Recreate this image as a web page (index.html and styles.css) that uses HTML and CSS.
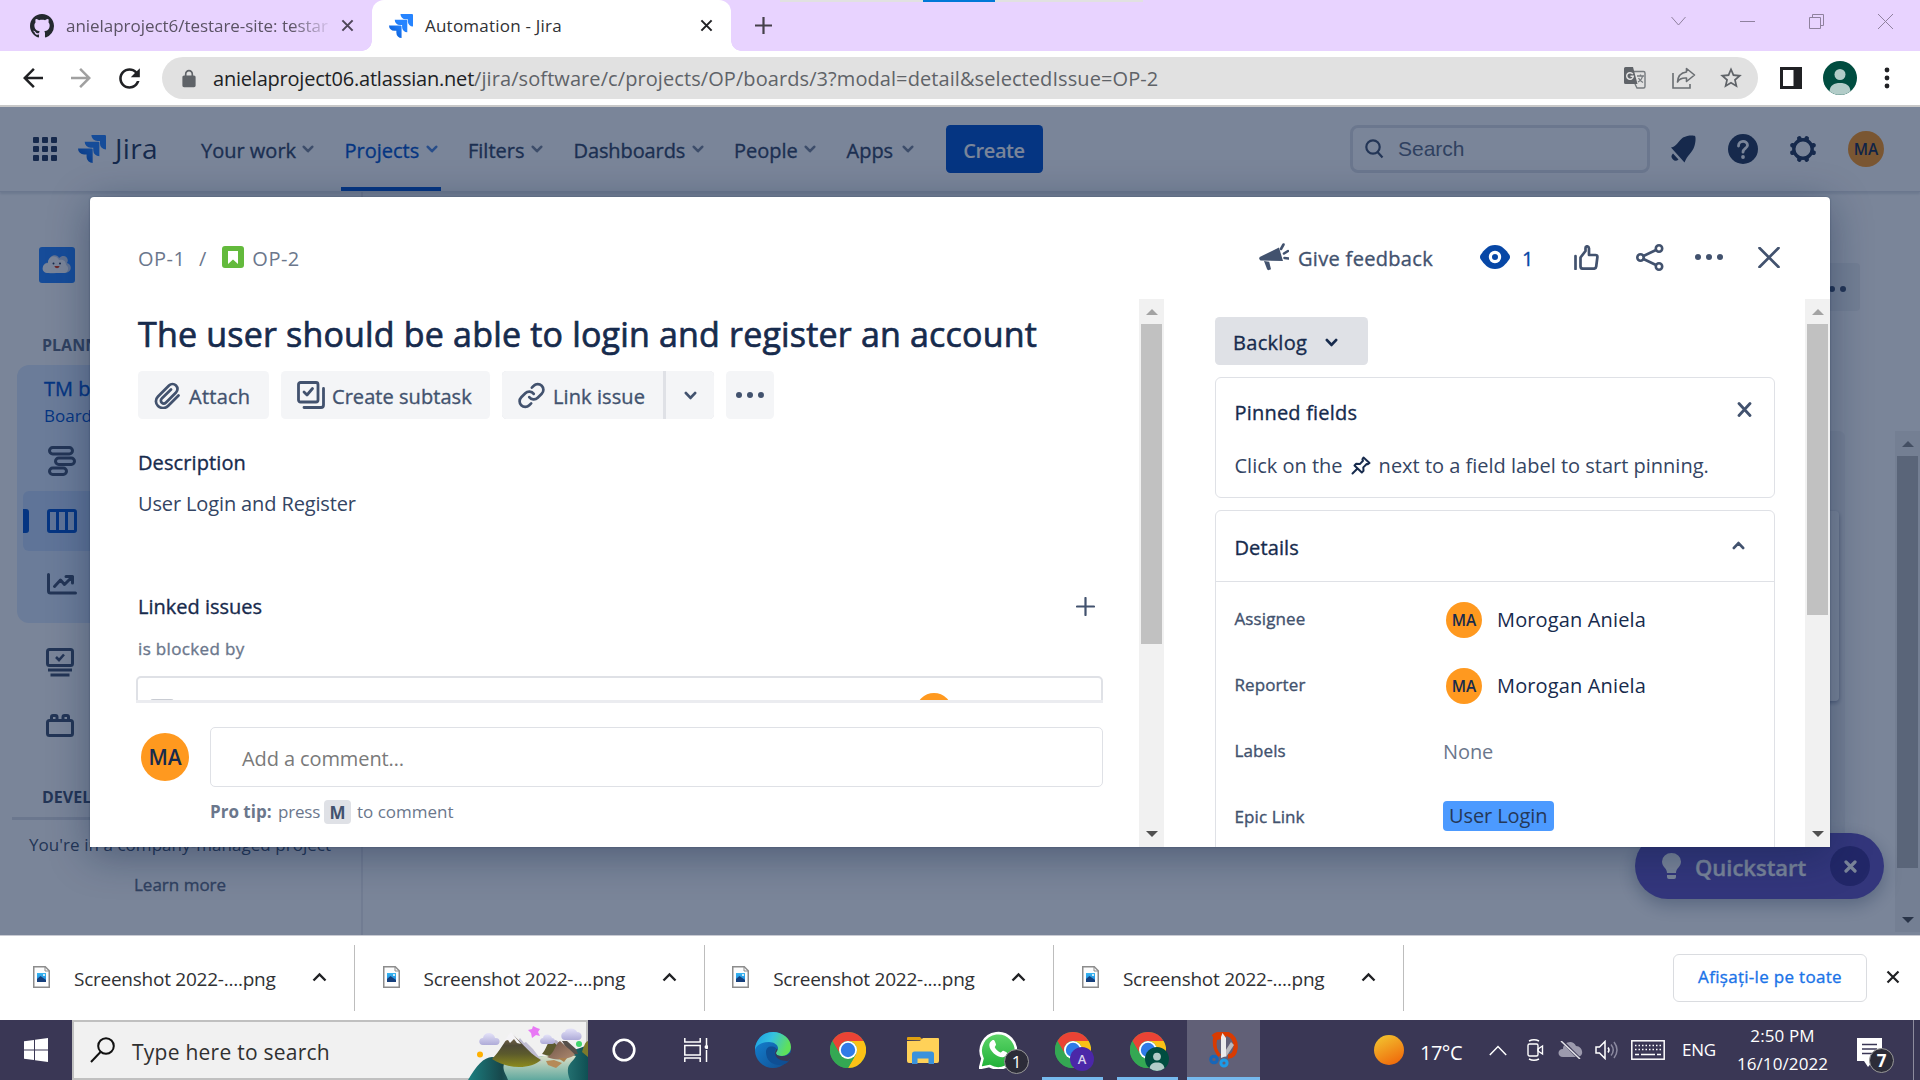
FILE: index.html
```
<!DOCTYPE html>
<html lang="en">
<head>
<meta charset="utf-8">
<title>Automation - Jira</title>
<link rel="stylesheet" href="styles.css">
</head>
<body>
<svg class="defs" width="0" height="0">
  <defs>
    <linearGradient id="gj" x1="1" y1="0" x2="0" y2="1"><stop offset=".3" stop-color="#2684ff"/><stop offset="1" stop-color="#0052cc"/></linearGradient>
    <linearGradient id="gsun" x1=".2" y1="0" x2=".7" y2="1"><stop offset="0" stop-color="#f2c32f"/><stop offset="1" stop-color="#f0690b"/></linearGradient>
    <linearGradient id="gedge" x1="0" y1="0" x2="1" y2=".3"><stop offset="0" stop-color="#1b9de2"/><stop offset=".5" stop-color="#35c1e0"/><stop offset="1" stop-color="#5fe05a"/></linearGradient>
    <linearGradient id="gedge2" x1="0" y1="0" x2="1" y2="1"><stop offset="0" stop-color="#1386d8"/><stop offset="1" stop-color="#114a8b"/></linearGradient>
    <linearGradient id="gwa" x1="0" y1="0" x2="0" y2="1"><stop offset="0" stop-color="#5fd66a"/><stop offset="1" stop-color="#20b038"/></linearGradient>
    <linearGradient id="gmt" x1="0" y1="0" x2="0" y2="1"><stop offset="0" stop-color="#8b7355"/><stop offset=".35" stop-color="#4f4a35"/><stop offset=".6" stop-color="#5b5a2c"/><stop offset="1" stop-color="#8c8a1c"/></linearGradient>
    <linearGradient id="gmt2" x1="0" y1="0" x2="1" y2="1"><stop offset="0" stop-color="#6b5347"/><stop offset="1" stop-color="#b08a70"/></linearGradient>
    <linearGradient id="gcl" x1="0" y1="0" x2="0" y2="1"><stop offset="0" stop-color="#e4e2f8"/><stop offset="1" stop-color="#aeabd8"/></linearGradient>
    <linearGradient id="gsea" x1="0" y1="0" x2="1" y2="0"><stop offset="0" stop-color="#1c7f80"/><stop offset=".28" stop-color="#17474b"/><stop offset=".6" stop-color="#3d9c97"/><stop offset="1" stop-color="#0f4f53"/></linearGradient>
    <linearGradient id="gsand" x1="0" y1="0" x2="0" y2="1"><stop offset="0" stop-color="#e3e3cb"/><stop offset="1" stop-color="#5fa89e"/></linearGradient>
    <linearGradient id="gpic" x1="0" y1="0" x2="0" y2="1"><stop offset="0" stop-color="#37b6f2"/><stop offset="1" stop-color="#1c7fd6"/></linearGradient>
    <symbol id="jira" viewBox="0 0 24 24"><path fill="#2684ff" d="M23.013 0H11.455a5.215 5.215 0 0 0 5.215 5.215h2.129v2.057A5.215 5.215 0 0 0 24 12.483V1.005A1.001 1.001 0 0 0 23.013 0Z"/><path fill="url(#gj)" d="M17.294 5.757H5.736a5.215 5.215 0 0 0 5.215 5.214h2.129v2.058a5.218 5.218 0 0 0 5.215 5.214V6.758a1.001 1.001 0 0 0-1.001-1.001zM11.571 11.513H0a5.218 5.218 0 0 0 5.232 5.215h2.130v2.057A5.215 5.215 0 0 0 12.575 24V12.518a1.005 1.005 0 0 0-1.005-1.005z"/></symbol>
    <symbol id="chev" viewBox="0 0 12 8"><path d="M1.800 1.800 6 6.200l4.200-4.400" fill="none" stroke="currentColor" stroke-width="2.600" stroke-linecap="round" stroke-linejoin="round"/></symbol>
    <symbol id="cross" viewBox="0 0 14 14"><path d="M1.500 1.500l11 11M12.500 1.500l-11 11" fill="none" stroke="currentColor" stroke-width="2.200"/></symbol>
    <symbol id="dots" viewBox="0 0 28 8"><circle cx="3" cy="4" r="3"/><circle cx="14" cy="4" r="3"/><circle cx="25" cy="4" r="3"/></symbol>
    <symbol id="person" viewBox="0 0 34 34"><circle cx="17" cy="17" r="17" fill="#004d40"/><circle cx="17" cy="13.500" r="5.500" fill="#b2ccc8"/><path d="M6.500 30.200C7 24.500 11 22 17 22s10 2.500 10.500 8.200A17 17 0 0 1 6.500 30.200z" fill="#b2ccc8"/></symbol>
    <symbol id="chrome" viewBox="0 0 36 36"><circle cx="18" cy="18" r="18" fill="#34a853"/><path d="M2.400 9A18 18 0 0 1 33.600 9H18a9 9 0 0 0-7.800 13.500z" fill="#ea4335"/><path d="M33.600 9A18 18 0 0 1 18 36l7.800-13.500A9 9 0 0 0 18 9z" fill="#fbc116"/><path d="M2.400 9l7.800 13.500A9 9 0 0 0 25.800 22.500L18 36A18 18 0 0 1 2.400 9z" fill="#34a853"/><circle cx="18" cy="18" r="9" fill="#fff"/><circle cx="18" cy="18" r="7.200" fill="#2f7be8"/></symbol>
    <symbol id="file" viewBox="0 0 17 22"><path d="M.75.75h11.500l4 4v16.500H.75z" fill="#fdfdfd" stroke="#8c8c8c" stroke-width="1.500"/><path d="M12 1v4h4" fill="none" stroke="#8c8c8c"/><path d="M4 7h9v9H4z" fill="url(#gpic)"/><path d="M4 16v-3l3.500-3L13 14v2z" fill="#16407c"/><circle cx="11" cy="9" r="1" fill="#fff"/></symbol>
  </defs>
</svg>

<header class="tabs">
  <div class="tab">
    <svg width="24" height="24" viewBox="0 0 16 16" fill="#24292f"><path d="M8 0C3.580 0 0 3.580 0 8c0 3.540 2.290 6.530 5.470 7.590.4.07.55-.17.55-.38 0-.19-.01-.82-.01-1.490-2.010.37-2.530-.49-2.690-.94-.09-.23-.48-.94-.82-1.130-.28-.15-.68-.52-.01-.53.63-.01 1.080.58 1.230.82.72 1.210 1.870.87 2.330.66.07-.52.28-.87.51-1.070-1.780-.2-3.640-.89-3.640-3.950 0-.87.31-1.590.82-2.150-.08-.2-.36-1.020.08-2.120 0 0 .67-.21 2.200.82.64-.18 1.320-.27 2-.27s1.360.09 2 .27c1.530-1.040 2.200-.82 2.200-.82.44 1.100.16 1.920.08 2.120.51.56.82 1.270.82 2.150 0 3.070-1.870 3.750-3.650 3.950.29.25.54.73.54 1.480 0 1.070-.01 1.930-.01 2.200 0 .21.15.46.55.38A8.010 8.010 0 0 0 16 8c0-4.420-3.580-8-8-8z"/></svg>
    <span class="tab-title tab-title-faded">anielaproject6/testare-site: testar</span>
    <svg class="tab-x" width="13" height="13"><use href="#cross"/></svg>
  </div>
  <div class="tab tab-active">
    <svg width="24" height="24"><use href="#jira"/></svg>
    <span class="tab-title">Automation - Jira</span>
    <svg class="tab-x" width="13" height="13"><use href="#cross"/></svg>
  </div>
  <svg class="new-tab" width="17" height="17" viewBox="0 0 17 17"><path d="M8.500 0v17M0 8.500h17" stroke="#45404a" stroke-width="2.200"/></svg>
  <div class="share-bar"><i></i></div>
  <div class="win">
    <svg width="15" height="15" viewBox="0 0 15 15"><path d="M.5 3l7 8 7-8"/></svg>
    <svg width="15" height="15" viewBox="0 0 15 15"><path d="M0 7.500h15"/></svg>
    <svg width="15" height="15" viewBox="0 0 15 15"><path d="M.5 3.500h11v11H.5zM3.500 3.500v-3h11v11h-3"/></svg>
    <svg width="15" height="15" viewBox="0 0 15 15"><path d="M0 0l15 15M15 0L0 15"/></svg>
  </div>
</header>

<div class="toolbar">
  <svg width="30" height="30" viewBox="0 0 24 24" fill="#202124"><path d="M20 11H7.830l5.590-5.590L12 4l-8 8 8 8 1.410-1.410L7.830 13H20v-2z"/></svg>
  <svg class="fwd" width="30" height="30" viewBox="0 0 24 24" fill="#a0a0a0"><path d="M4 13h12.170l-5.590 5.590L12 20l8-8-8-8-1.410 1.410L16.170 11H4v2z"/></svg>
  <svg class="reload" width="31" height="31" viewBox="0 0 24 24" fill="#202124"><path d="M17.650 6.350C16.200 4.900 14.210 4 12 4c-4.420 0-7.990 3.580-7.990 8s3.570 8 7.990 8c3.730 0 6.840-2.550 7.730-6h-2.080c-.82 2.330-3.040 4-5.650 4-3.310 0-6-2.690-6-6s2.690-6 6-6c1.660 0 3.140.69 4.220 1.780L13 11h7V4l-2.350 2.350z"/></svg>
  <div class="omni">
    <svg width="18" height="19" viewBox="2 0 20 23" fill="#5f6368"><path d="M18 8h-1V6c0-2.760-2.240-5-5-5S7 3.240 7 6v2H6c-1.100 0-2 .9-2 2v10c0 1.100.9 2 2 2h12c1.100 0 2-.9 2-2V10c0-1.100-.9-2-2-2zM9 6c0-1.660 1.340-3 3-3s3 1.340 3 3v2H9V6z"/></svg>
    <div class="url"><span class="host">anielaproject06.atlassian.net</span><span class="path">/jira/software/c/projects/OP/boards/3?modal=detail&amp;selectedIssue=OP-2</span></div>
    <svg width="22" height="22" viewBox="0 0 22 22"><path d="M10 4.500h9.500a1.500 1.500 0 0 1 1.500 1.500v13.500a1.500 1.500 0 0 1-1.500 1.500H13l-2-4" fill="none" stroke="#757a7e" stroke-width="1.400"/><path d="M1.500 0H9l4.500 17H1.500A1.500 1.500 0 0 1 0 15.500v-14A1.500 1.500 0 0 1 1.500 0z" fill="#5f6368"/><path d="M8.800 7.200A3.300 3.300 0 1 0 9.300 9.300H6.500" fill="none" stroke="#e1e1e1" stroke-width="1.500"/><path d="M13 9h7M16.500 7.500V9M18.500 9c-.5 3-2.500 5-4.500 6M14.500 11c1 2 2.500 3.500 4.500 4.500" fill="none" stroke="#757a7e" stroke-width="1.300"/></svg>
    <svg class="share" width="24" height="22" viewBox="0 0 24 22" fill="none" stroke="#6a6e72" stroke-width="1.600"><path d="M1 6v15h17v-4"/><path d="M14.500 1.500 22.500 8l-8 6.500V11c-4.500-.3-7.500 1.200-9 4 .3-5.500 3.500-9.300 9-10z" stroke-linejoin="round"/></svg>
    <svg width="26" height="26" viewBox="0 0 24 24" fill="#5f6368"><path d="M22 9.240l-7.190-.62L12 2 9.190 8.630 2 9.240l5.460 4.730L5.820 21 12 17.270 18.180 21l-1.630-7.030L22 9.240zM12 15.400l-3.760 2.270 1-4.280-3.320-2.880 4.380-.38L12 6.100l1.710 4.040 4.380.38-3.320 2.880 1 4.280L12 15.400z"/></svg>
  </div>
  <svg width="22" height="22" viewBox="0 0 22 22"><path d="M0 0h22v22H0z" fill="#202124"/><path d="M3 3h10.500v16H3z" fill="#fff"/></svg>
  <svg class="me" width="34" height="34"><use href="#person"/></svg>
  <svg width="6" height="22" viewBox="0 0 6 22" fill="#202124"><circle cx="3" cy="3" r="2.400"/><circle cx="3" cy="11" r="2.400"/><circle cx="3" cy="19" r="2.400"/></svg>
</div>

<main class="page">
  <nav class="nav">
    <svg width="24" height="24" viewBox="0 0 24 24" fill="#253858"><path d="M1 0h4a1 1 0 0 1 1 1v4a1 1 0 0 1-1 1H1a1 1 0 0 1-1-1V1a1 1 0 0 1 1-1zm9 0h4a1 1 0 0 1 1 1v4a1 1 0 0 1-1 1h-4a1 1 0 0 1-1-1V1a1 1 0 0 1 1-1zm9 0h4a1 1 0 0 1 1 1v4a1 1 0 0 1-1 1h-4a1 1 0 0 1-1-1V1a1 1 0 0 1 1-1zM1 9h4a1 1 0 0 1 1 1v4a1 1 0 0 1-1 1H1a1 1 0 0 1-1-1v-4a1 1 0 0 1 1-1zm9 0h4a1 1 0 0 1 1 1v4a1 1 0 0 1-1 1h-4a1 1 0 0 1-1-1v-4a1 1 0 0 1 1-1zm9 0h4a1 1 0 0 1 1 1v4a1 1 0 0 1-1 1h-4a1 1 0 0 1-1-1v-4a1 1 0 0 1 1-1zM1 18h4a1 1 0 0 1 1 1v4a1 1 0 0 1-1 1H1a1 1 0 0 1-1-1v-4a1 1 0 0 1 1-1zm9 0h4a1 1 0 0 1 1 1v4a1 1 0 0 1-1 1h-4a1 1 0 0 1-1-1v-4a1 1 0 0 1 1-1zm9 0h4a1 1 0 0 1 1 1v4a1 1 0 0 1-1 1h-4a1 1 0 0 1-1-1v-4a1 1 0 0 1 1-1z"/></svg>
    <svg class="logo" width="28" height="28"><use href="#jira"/></svg>
    <span class="brand">Jira</span>
    <div class="links">
      <a class="link w-work">Your work<svg width="12" height="8"><use href="#chev"/></svg></a>
      <a class="link w-proj active">Projects<svg width="12" height="8"><use href="#chev"/></svg></a>
      <a class="link w-filt">Filters<svg width="12" height="8"><use href="#chev"/></svg></a>
      <a class="link w-dash">Dashboards<svg width="12" height="8"><use href="#chev"/></svg></a>
      <a class="link w-peop">People<svg width="12" height="8"><use href="#chev"/></svg></a>
      <a class="link w-apps">Apps<svg width="12" height="8"><use href="#chev"/></svg></a>
    </div>
    <div class="create">Create</div>
    <div class="search"><svg width="19" height="20" viewBox="0 0 19 20" fill="none" stroke="#42526e" stroke-width="2.200"><circle cx="8" cy="8" r="6.700"/><path d="M12.500 13l5 5.500"/></svg>Search</div>
    <svg class="bell" width="26" height="28" viewBox="0 0 26 28" fill="#253858"><path d="M1 12.500C7 11.500 8 6 13 2.500 17 0 24 0 25 1s.8 8-1.500 12.500C21.500 18 17.500 20 14.500 27.500z"/><path d="M3 18.500l5.500 6a3.600 3.600 0 0 1-5.500-6z"/></svg>
    <svg class="help" width="30" height="30" viewBox="0 0 30 30"><circle cx="15" cy="15" r="15" fill="#253858"/><path d="M10.500 12c0-6 9-6 9-.8 0 3.300-4.500 3.300-4.500 7" fill="none" stroke="#fff" stroke-width="2.800" stroke-linecap="round"/><circle cx="15" cy="23" r="1.900" fill="#fff"/></svg>
    <svg class="gear" width="28" height="28" viewBox="0 0 28 28" fill="none" stroke="#253858"><circle cx="14" cy="14" r="9.200" stroke-width="3.400"/><path stroke-width="4.600" stroke-linecap="round" d="M10.300 3.400l.3.900M17.700 3.400l-.3.900M10.300 24.600l.3-.9M17.700 24.600l-.3-.9M3.400 10.300l.9.300M3.400 17.700l.9-.3M24.600 10.300l-.9.300M24.600 17.700l-.9-.3"/></svg>
    <div class="av av36">MA</div>
  </nav>

  <div class="body">
    <aside class="side">
      <svg class="proj" width="36" height="36" viewBox="0 0 36 36"><rect width="36" height="36" rx="3" fill="#2684ff"/><path d="M17 26c-5 .5-13 .7-13-5 0-4 3-5.500 5-5.200C9.500 8 18 6 20 11c5-5 11 0 8 5 5 1 6 10-3 10z" fill="#c9d6ee"/><path d="M8 26c-6-.5-6-9 1-10 0-7 8-9 11-3 5-1 7 2 7 5 3 1 3 8-2 8z" fill="#fff"/><circle cx="14.500" cy="16.500" r="1" fill="#253858"/><circle cx="21" cy="16.500" r="1" fill="#253858"/><path d="M15.500 19h5c-.5 3-4.500 3-5 0z" fill="#de350b"/></svg>
      <div class="side-h">PLANNING</div>
      <div class="group">
        <div class="g-title">TM board</div>
        <div class="g-sub">Board</div>
        <div class="g-item g-road"><svg width="28" height="30" viewBox="0 0 28 30" fill="none" stroke="#42526e" stroke-width="3"><rect x="1.500" y="1.500" width="23" height="6.500" rx="3.200"/><rect x="7.500" y="12" width="19" height="6.500" rx="3.200"/><rect x="1.500" y="22" width="17" height="6.500" rx="3.200"/></svg></div>
        <div class="g-item g-sel"><i></i><svg width="30" height="24" viewBox="0 0 30 24" fill="none" stroke="#0052cc" stroke-width="3"><rect x="1.500" y="1.500" width="27" height="21" rx="1.500"/><path d="M10.500 1v22M19.500 1v22"/></svg></div>
        <div class="g-item g-chart"><svg width="30" height="22" viewBox="0 0 30 22" fill="none" stroke="#42526e" stroke-width="3" stroke-linecap="round" stroke-linejoin="round"><path d="M1.500 1.500V18q0 2 2 2h25"/><path d="M7.500 13.500l6-6.500 4 4.500 8-8M19 3.500h6.500V10"/></svg></div>
      </div>
      <svg class="s-ico1" width="28" height="29" viewBox="0 0 28 29" fill="none" stroke="#42526e"><rect x="1.500" y="1.500" width="25" height="16" rx="2" stroke-width="3"/><path d="M10 9l3 3 5-5.500" stroke-width="2.600"/><path d="M2 22h24M4.500 27h19" stroke-width="3"/></svg>
      <svg class="s-ico2" width="28" height="23" viewBox="0 0 28 23" fill="none" stroke="#42526e" stroke-width="3"><rect x="1.500" y="6.500" width="25" height="15" rx="2"/><path d="M5.500 6V3q0-1.500 1.500-1.500h2.500Q11 1.500 11 3v3M17 6V3q0-1.500 1.500-1.500H21q1.500 0 1.500 1.500v3"/></svg>
      <div class="side-h dev">DEVELOPMENT</div>
      <div class="rule"></div>
      <div class="foot1">You're in a company-managed project</div>
      <div class="foot2">Learn more</div>
    </aside>
    <section class="board">
      <div class="board-more"><svg width="28" height="8" fill="#42526e"><use href="#dots"/></svg></div>
      <div class="board-col"><div class="card"></div></div>
    </section>
    <div class="page-scroll"><i class="up"></i><b></b><i class="dn"></i></div>
  </div>

  <div class="quick"><svg width="19" height="26" viewBox="0 0 19 26" fill="#fff"><path d="M5 20c0-5-5-6-5-11.500a9.500 8.500 0 0 1 19 0C19 14 14 15 14 20zM5 22h9v2q0 2-2 2H7q-2 0-2-2z"/></svg><span>Quickstart</span><em><svg width="13" height="13" viewBox="0 0 13 13"><path d="M2 2l9 9M11 2l-9 9" stroke="#fff" stroke-width="3.200" stroke-linecap="round"/></svg></em></div>
  <div class="blanket"></div>

  <div class="modal">
    <div class="m-head">
      <span class="crumb">OP-1</span><span class="slash">/</span>
      <svg class="story" width="22" height="22" viewBox="0 0 22 22"><rect width="22" height="22" rx="3" fill="#63ba3c"/><path d="M6 5h10v13l-5-4.500L6 18z" fill="#fff"/></svg>
      <span class="crumb">OP-2</span>
      <svg class="horn" width="30" height="28" viewBox="0 0 30 28"><path d="M20 4.500L24 18 1.500 17.500q-2-1.500-.8-3.500z" fill="#42526e"/><path d="M5 18l3 8q.5 1.500 2 1l2-.8-1.800-7.500z" fill="#42526e"/><path d="M22 6l2.500-4.500M25 10.500l4-2.500M25.500 15l4 .5" stroke="#42526e" stroke-width="2.600" stroke-linecap="round"/></svg>
      <span class="feedback">Give feedback</span>
      <svg class="eye" width="30" height="24" viewBox="0 0 30 24"><path d="M15 0C22 0 26 5 29.500 10q1 2 0 4C26 19 22 24 15 24S4 19 .5 14q-1-2 0-4C4 5 8 0 15 0z" fill="#0747a6"/><circle cx="15" cy="12" r="4.600" fill="none" stroke="#fff" stroke-width="3.200"/></svg>
      <span class="watch">1</span>
      <svg class="thumb" width="25" height="25" viewBox="0 0 25 25" fill="none" stroke="#42526e" stroke-width="2.700" stroke-linejoin="round"><path d="M1.500 11v13" stroke-linecap="round"/><path d="M6.500 12.500l5-6.500V3q0-1.700 1.600-1.700T15 3.500V10h6.500q2 0 1.900 2l-1.200 9.500q-.3 2.200-2.400 2.200H9q-2.500 0-2.500-2.500z"/></svg>
      <svg class="shr" width="28" height="27" viewBox="0 0 28 27" fill="none" stroke="#42526e" stroke-width="2.600"><circle cx="4.500" cy="13.500" r="3.200"/><circle cx="23" cy="4.500" r="3.200"/><circle cx="23" cy="22.500" r="3.200"/><path d="M7.500 12L20 6M7.500 15L20 21"/></svg>
      <svg class="dts" width="28" height="8" viewBox="0 0 28 8" fill="#42526e"><use href="#dots"/></svg>
      <svg width="22" height="21" viewBox="0 0 22 21" stroke="#42526e" stroke-width="2.700" stroke-linecap="round"><path d="M1.500 1l19 19M20.500 1l-19 19"/></svg>
    </div>
    <div class="m-body">
      <div class="left">
        <h1>The user should be able to login and register an account</h1>
        <div class="btns">
          <div class="btn b-att"><svg width="26" height="27" viewBox="0 0 26 27" fill="none" stroke="#42526e" stroke-width="2.700" stroke-linecap="round"><path d="M24.500 13.500L14 24c-3 3-7.500 2.300-10 0s-3-6.500 0-9.500L15 3.500c2-2 5-2 7 0s2 5 0 7L12 20.500c-1.300 1.300-3 1.300-4.200.2s-1.300-3 0-4.200L17 7.500"/></svg>Attach</div>
          <div class="btn b-sub"><svg width="28" height="28" viewBox="0 0 28 28" fill="none" stroke="#42526e" stroke-width="2.800" stroke-linecap="round" stroke-linejoin="round"><rect x="1.500" y="1.500" width="19.500" height="19.500" rx="2"/><path d="M7 11l3 3 5.500-6.500M7 26.500h17q2.500 0 2.500-2.500V7.500"/></svg>Create subtask</div>
          <div class="split"><div class="btn b-link"><svg width="27" height="27" viewBox="0 0 24 24" fill="none" stroke="#42526e" stroke-width="2.400" stroke-linecap="round"><path d="M10 13.500a5 5 0 0 0 7.500.5l3.600-3.500a5 5 0 0 0-7.100-7.100L12.300 5"/><path d="M14 10.500a5 5 0 0 0-7.500-.5l-3.600 3.500a5 5 0 0 0 7.100 7.100l1.700-1.600"/></svg>Link issue</div><div class="btn b-chev"><svg width="13" height="9"><use href="#chev"/></svg></div></div>
          <div class="btn b-more"><svg width="28" height="8" fill="#42526e"><use href="#dots"/></svg></div>
        </div>
        <h2 class="desc">Description</h2>
        <p class="desc-t">User Login and Register</p>
        <div class="li-row"><h2>Linked issues</h2><svg width="19" height="19" viewBox="0 0 19 19"><path d="M9.500 1v17M1 9.500h17" stroke="#42526e" stroke-width="2.200" stroke-linecap="round"/></svg></div>
        <div class="blocked">is blocked by</div>
        <div class="li-clip"><div class="li-box"><i class="stub"></i><i class="dot"></i></div></div>
        <div class="comment">
          <div class="av av48">MA</div>
          <div>
            <div class="c-in">Add a comment…</div>
            <div class="tip"><b>Pro tip:</b><span class="press">press</span><kbd>M</kbd><span>to comment</span></div>
          </div>
        </div>
      </div>
      <div class="scroll"><i class="up"></i><b class="t1"></b><i class="dn"></i></div>
      <div class="right">
        <div class="status">Backlog<svg width="13" height="9"><use href="#chev"/></svg></div>
        <div class="panel pinned">
          <div class="p-head">Pinned fields<svg width="15" height="15" viewBox="0 0 15 15" stroke="#42526e" stroke-width="2.800" stroke-linecap="round"><path d="M2 1.500l11 12M13 1.500L2 13.500"/></svg></div>
          <div class="p-text">Click on the <svg width="20" height="19" viewBox="0 0 20 19" fill="none" stroke="#172b4d" stroke-width="2" stroke-linejoin="round" stroke-linecap="round"><path d="M12.500 1.500L18.500 7l-2 1.300-.8-.3-3.400 3.400.2 3.400-1.700 1.700L3.500 9.500l1.700-1.700 3.600.3L12 4.800l-.6-1.500zM6.500 12.500L1.500 17.500"/></svg> next to a field label to start pinning.</div>
        </div>
        <div class="panel details">
          <div class="d-head">Details<svg class="flip" width="13" height="9"><use href="#chev"/></svg></div>
          <div class="f"><label>Assignee</label><div class="av av36">MA</div><span>Morogan Aniela</span></div>
          <div class="f"><label>Reporter</label><div class="av av36">MA</div><span>Morogan Aniela</span></div>
          <div class="f"><label>Labels</label><span class="none">None</span></div>
          <div class="f"><label>Epic Link</label><span class="epic">User Login</span></div>
        </div>
      </div>
      <div class="scroll"><i class="up"></i><b class="t2"></b><i class="dn"></i></div>
    </div>
  </div>
</main>

<div class="shelf">
  <div class="dl"><svg width="17" height="22"><use href="#file"/></svg><span>Screenshot 2022-....png</span><svg class="flip" width="15" height="10" viewBox="0 0 15 10"><path d="M1.500 1.500l6 6 6-6" fill="none" stroke="#202124" stroke-width="2.400"/></svg></div>
  <div class="dl"><svg width="17" height="22"><use href="#file"/></svg><span>Screenshot 2022-....png</span><svg class="flip" width="15" height="10" viewBox="0 0 15 10"><path d="M1.500 1.500l6 6 6-6" fill="none" stroke="#202124" stroke-width="2.400"/></svg></div>
  <div class="dl"><svg width="17" height="22"><use href="#file"/></svg><span>Screenshot 2022-....png</span><svg class="flip" width="15" height="10" viewBox="0 0 15 10"><path d="M1.500 1.500l6 6 6-6" fill="none" stroke="#202124" stroke-width="2.400"/></svg></div>
  <div class="dl"><svg width="17" height="22"><use href="#file"/></svg><span>Screenshot 2022-....png</span><svg class="flip" width="15" height="10" viewBox="0 0 15 10"><path d="M1.500 1.500l6 6 6-6" fill="none" stroke="#202124" stroke-width="2.400"/></svg></div>
  <div class="all">Afișați-le pe toate</div>
  <svg class="sx" width="14" height="14"><use href="#cross"/></svg>
</div>

<footer class="task">
  <div class="start"><svg width="24" height="24" viewBox="0 0 24 24" fill="#fff"><path d="M0 3.300L10 2v9.500H0zM11 1.800L24 0v11.500H11zM0 12.500h10V22L0 20.700zM11 12.500h13V24l-13-1.800z"/></svg></div>
  <div class="tsearch">
    <svg width="26" height="26" viewBox="0 0 26 26" fill="none" stroke="#111" stroke-width="2"><circle cx="16" cy="9" r="7.800"/><path d="M10.500 15L1 25"/></svg>
    <span>Type here to search</span>
    <svg class="art" width="120" height="60" viewBox="0 0 120 60">
      <path d="M0 60C8 46 16 37 24 37c24 4 66 0 96-12v35z" fill="url(#gsea)"/>
      <path d="M36 44c20-2 50-14 72-8-4 8-12 8-6 24H40c-2-6-6-10-4-16z" fill="url(#gsand)"/>
      <path d="M46 14l4 7 2-3 4 5 2-1 7 7 9 12-14 2z" fill="#c0bdd2"/>
      <path d="M24 39C33 30 37 20 43 14c8 4 16 18 30 26-10 9-32 10-49-1z" fill="url(#gmt)"/><path d="M36 21l7-9 10 12-4-1-3-4-4 4-2-3z" fill="#f4f3f6"/>
      <path d="M84 21l4-1 7 6 3 10-10-2z" fill="#b6b1c4"/><path d="M74 34c4-4 5-12 9-13 4 2 9 6 11 11l-9 5z" fill="#5c5a2e"/><path d="M94 21l5 0 9 8 2 5-8 0z" fill="#55504a"/><path d="M79 37c8-3 8-14 13-16 3 3 12 10 15 14-8 5-20 6-28 2z" fill="url(#gmt2)"/><path d="M114 32c2-6 3-10 6-11v16z" fill="#7d7a2c"/>
      <path d="M78 41l8-1 8 3-6 5-8-3z" fill="#b58a58"/><path d="M90 38h9l-3 4z" fill="#a9804f"/>
      <path d="M15 25c-5 0-5-7 0-7 1-7 11-6 12 0 6-1 6 7 1 7z" fill="url(#gcl)"/><path d="M97 20c-5 0-5-8 0-8 1-5 11-4 12 0 6 0 6 8 1 8z" fill="url(#gcl)"/><path d="M75 24c-4 0-4-6 0-6 1-5 8-4 9 0 4 0 4 6 0 6z" fill="url(#gcl)"/>
      <path d="M65 6l4 2 3 1-2 3 2 4-4-1-4 3-1-5-3-3 4-1z" fill="#e878f5"/><circle cx="12" cy="34.500" r="3" fill="#ffb000"/><circle cx="111" cy="24" r="3" fill="#3fd46b"/>
    </svg>
  </div>
  <div class="tb"><svg width="24" height="24" viewBox="0 0 24 24"><circle cx="12" cy="12" r="10.300" fill="none" stroke="#fff" stroke-width="2.600"/></svg></div>
  <div class="tb tview"><svg width="24" height="24" viewBox="0 0 24 24" fill="none" stroke="#fff" stroke-width="1.500"><path d="M.8 0v4h15.400V0M.8 24v-4h15.400v4M.8 7.500h15.400v9.500H.8zM22.500 0v7M22.500 12v12"/><circle cx="22.500" cy="9" r="1.200" fill="#fff"/></svg></div>
  <div class="tb"><svg width="36" height="36" viewBox="0 0 36 36"><circle cx="18" cy="18" r="18" fill="url(#gedge2)"/><path d="M0 16C2 6 9 0 18 0c10 0 18 7 18 15 0 6-5 9-9 9s-6-1-6-3 2-2 2-5-4-6-9-6C8 10 2 12 0 18z" fill="url(#gedge)"/><path d="M11 20c0 8 6 13 13 13 4 0 7-1 9-3l2-3V22c-4 3-12 4-15-1-1-2 1-3 1-5-5-3-10-1-10 4z" fill="#0f4f94"/><path d="M22 16.500c1 1 0 3-.8 4-.7 1.500 1 3.700 5.800 3.700 3 0 6-1 9-4l0 5-3 4c-3-1-12 0-13-8 0-2 1-3.700 2-4.700z" fill="#3a3755"/></svg></div>
  <div class="tb"><svg width="36" height="36"><use href="#chrome"/></svg></div>
  <div class="tb"><svg width="32" height="27" viewBox="0 0 32 27"><path d="M0 1q0-1 1-1h12l3 3H0z" fill="#e0a010"/><path d="M0 4l13-.2L16 1h15q1 0 1 1v22q0 2-2 2H2q-2 0-2-2z" fill="#ffd158"/><path d="M5 27V17q0-2.500 2.500-2.500h17Q27 14.500 27 17v10h-5.500v-5.500h-11V27z" fill="#3a92dc"/></svg></div>
  <div class="tb"><svg width="38" height="38" viewBox="0 0 38 38"><path d="M1 37l2.500-9.500A17.600 17.600 0 1 1 10.500 35z" fill="url(#gwa)" stroke="#fff" stroke-width="2.600"/><path d="M13 9.500c1.500-1 2.500-.3 3 1.200l1 2.500c.3 1-1.500 2.300-1.200 3.100 1.200 2.500 3 4 5.600 5.200.8.200 2-2.200 3-1.800l3.200 1.600c1.200.7-.3 4.600-3.800 4.900-5.500.3-13.300-6.200-13.500-12 0-2 1-3.500 2.700-4.700z" fill="#fff"/></svg><span class="badge">1</span></div>
  <div class="tb run"><svg width="36" height="36"><use href="#chrome"/></svg><span class="pb pa">A</span></div>
  <div class="tb run"><svg width="36" height="36"><use href="#chrome"/></svg><svg class="pb" width="25" height="25"><use href="#person"/></svg></div>
  <div class="tb snip"><svg width="30" height="36" viewBox="0 0 30 36"><path d="M4 5q6-5 13-3.500C24 3 27 9 26.500 16c-.5 5-3 8.500-7.500 8.500" fill="none" stroke="#d83b01" stroke-width="4.500"/><path d="M5 2L17 1v5L8 8Q6 16 12 23l-3 2Q1 14 5 2z" fill="#d83b01"/><path d="M22 10l3 3-8 12-4-1z" fill="#b9b9bd"/><path d="M13.500 1l3.500 5v18l-5 2V5z" fill="#ececec"/><circle cx="5" cy="27.500" r="3.300" fill="none" stroke="#1766b8" stroke-width="3"/><circle cx="15" cy="31" r="3.100" fill="none" stroke="#1b9be8" stroke-width="3"/></svg></div>
  <div class="tray">
    <svg class="sun" width="30" height="30"><circle cx="15" cy="15" r="15" fill="url(#gsun)"/></svg>
    <span class="temp">17°C</span>
    <svg class="t-up" width="18" height="11" viewBox="0 0 18 11"><path d="M.8 10L9 1.500 17.200 10" fill="none" stroke="#fff" stroke-width="1.500"/></svg>
    <svg class="t-cam" width="17" height="22" viewBox="0 0 17 22" fill="none" stroke="#fff" stroke-width="1.400"><rect x="1" y="5" width="10" height="12" rx="1.500"/><path d="M11 10l4.500-3v8L11 12zM2 2q5-2.500 10 0M2 20q5 2.500 10 0"/></svg>
    <svg class="t-cloud" width="25" height="18" viewBox="0 0 25 18"><path d="M5 16c-6 0-6-8 0-8 0-7 10-10 13-3 7 0 9 11 1 11z" fill="#9c9aad"/><path d="M4 0l18 18" stroke="#3a3755" stroke-width="3"/><path d="M3 0l19 18" stroke="#e5e5ea" stroke-width="1.500"/></svg>
    <svg class="t-vol" width="23" height="20" viewBox="0 0 23 20" fill="none" stroke-width="1.500"><path d="M1 7v6h3.500L10 18.500v-17L4.500 7z" stroke="#fff"/><path d="M13 7.500q2 2.500 0 5" stroke="#fff"/><path d="M16 4.500q4.500 5.500 0 11M19 2q6 8 0 16" stroke="#8b89a0"/></svg>
    <svg class="t-kb" width="34" height="20" viewBox="0 0 34 20" fill="none" stroke="#fff"><rect x=".8" y=".8" width="32.400" height="18.400" stroke-width="1.500"/><path d="M4 5.500h26M4 9.500h26" stroke-width="1.500" stroke-dasharray="1.500 2"/><path d="M4 14.500h4M10 14.500h14M26 14.500h4" stroke-width="1.500"/></svg>
    <span class="lang">ENG</span>
    <div class="clock"><span>2:50 PM</span><span>16/10/2022</span></div>
    <div class="notif"><svg width="25" height="30" viewBox="0 0 25 30"><path d="M0 0h25v23H16l-5 6-4-6H0z" fill="#fff"/><path d="M5 6.500h15M5 11h15M5 15.500h15" stroke="#3a3755" stroke-width="1.400"/></svg><span class="badge">7</span></div>
    <div class="peek"></div>
  </div>
</footer>
</body>
</html>
```
FILE: styles.css
```
* { box-sizing: border-box; }
html, body { margin: 0; padding: 0; }
body { width: 1920px; height: 1080px; overflow: hidden; display: flex; flex-direction: column; font: 400 20px/30px "Open Sans", "Noto Sans", sans-serif; color: #172b4d; white-space: nowrap; }
svg { flex: none; display: block; }
.defs { position: absolute; }
h1, h2, p { margin: 0; font-weight: 500; }

/* Slightly heavier strokes for medium-weight labels */
.link, h2, .btn, .blocked, .status, .p-head, .d-head, .f label, .feedback, .foot2, .g-title, .watch, .all { -webkit-text-stroke: .35px currentColor; }
h1 { -webkit-text-stroke: .7px currentColor; }

/* Browser tab strip */
.tabs { height: 51px; flex: none; background: #e8d3ff; display: flex; align-items: flex-start; position: relative; }
.tab { width: 372px; height: 51px; padding: 0 18px 0 30px; display: flex; align-items: center; gap: 12px; }
.tab-title { font-size: 17px; color: #5b5365; flex: 1; }
.tab-title-faded { letter-spacing: -.04px; -webkit-mask-image: linear-gradient(90deg, #000 225px, transparent 268px); mask-image: linear-gradient(90deg, #000 225px, transparent 268px); }
.tab-x { color: #4e4558; }
.tab-active { width: 359px; padding: 0 18px 0 17px; background: #fff; border-radius: 12px 12px 0 0; position: relative; }
.tab-active::before, .tab-active::after { content: ""; position: absolute; bottom: 0; width: 10px; height: 10px; }
.tab-active::before { left: -10px; background: radial-gradient(circle at 0 0, transparent 9.5px, #fff 10px); }
.tab-active::after { right: -10px; background: radial-gradient(circle at 100% 0, transparent 9.5px, #fff 10px); }
.tab-active .tab-title { color: #303134; letter-spacing: .22px; }
.tab-active .tab-x { color: #202124; }
.new-tab { margin: 17px 0 0 24px; }
.share-bar { position: absolute; left: 780px; top: 0; width: 363px; height: 2px; background: #e1e1e1; }
.share-bar i { display: block; width: 72px; height: 2px; margin-left: 143px; background: #0078d7; }
.win { margin: 14px 27px 0 auto; display: flex; gap: 54px; fill: none; stroke: #8f819e; }

/* Address bar */
.toolbar { height: 56px; flex: none; background: #fff; border-bottom: 2px solid #c8c8c8; display: flex; align-items: center; padding: 1px 30px 1px 18px; }
.fwd { margin-left: 18px; }
.reload { margin-left: 18px; }
.omni { width: 1596px; height: 42px; margin: 0 22px 0 17px; border-radius: 21px; background: #e1e1e1; display: flex; align-items: center; padding: 0 14px 0 18px; }
.url { flex: 1; margin-left: 15px; padding-top: 1px; color: #5f6368; }
.host { color: #202124; letter-spacing: -.21px; }
.path { letter-spacing: .08px; }
.share { margin: 0 22px 0 26px; }
.me { margin: 0 27px 0 21px; }

/* Jira page */
.page { height: 829px; flex: none; position: relative; background: #fff; overflow: hidden; border-bottom: 1px solid #c9cbd3; }
.nav { height: 85px; display: flex; align-items: center; padding: 0 36px 0 33px; border-bottom: 1px solid #dfe1e6; box-shadow: 0 2px 2px rgba(9, 30, 66, .12); position: relative; }
.logo { margin-left: 21px; }
.brand { width: 86px; margin: -2px 0 0 9px; font-size: 28px; font-weight: 500; letter-spacing: .3px; color: #253858; }
.links { display: flex; gap: 30.5px; height: 84px; }
.link { display: flex; justify-content: space-between; align-items: center; font-weight: 500; color: #344563; padding-top: 4px; }
.link svg { color: #7a869a; margin-top: -4px; }
.w-work { width: 113px; } .w-proj { width: 93px; } .w-filt { width: 75px; } .w-dash { width: 130px; letter-spacing: -.1px; } .w-peop { width: 82px; } .w-apps { width: 67px; }
.active { color: #0052cc; position: relative; }
.active svg { color: #4c86dc; }
.active::after { content: ""; position: absolute; left: -4px; right: -3px; bottom: 0; height: 4px; background: #0052cc; }
.create { width: 97px; height: 48px; margin-left: 32px; border-radius: 4.5px; background: #0052cc; color: #fff; font-weight: 600; letter-spacing: -.4px; line-height: 51px; text-align: center; }
.search { width: 300px; height: 48px; margin-left: auto; border: 3px solid #dfe1e6; border-radius: 8px; display: flex; align-items: center; gap: 14px; padding-left: 12px; font: 21px "Liberation Sans", sans-serif; color: #5e6c84; }
.bell { margin-left: 20px; } .help { margin-left: 32px; } .gear { margin: 0 31px; }
.av { flex: none; border-radius: 50%; background: #ff991f; color: #172b4d; font-weight: 600; display: flex; align-items: center; justify-content: center; }
.av36 { width: 36px; height: 36px; font-size: 15.5px; }
.av48 { width: 48px; height: 48px; font-size: 21px; }
.body { display: flex; height: 743px; }
.side { width: 363px; border-right: 2px solid #ebecf0; }
.proj { margin: 55px 0 0 39px; }
.side-h { font-size: 16px; font-weight: 700; color: #5e6c84; margin: 47px 0 0 42px; }
.group { margin: 5px 12px 0 17px; height: 258px; border-radius: 12px; background: #deebff; padding-top: 10px; }
.g-title { margin-left: 27px; color: #0052cc; font-weight: 500; line-height: 28px; }
.g-sub { margin-left: 27px; color: #0052cc; font-size: 17px; line-height: 26px; }
.g-item { margin-left: 6px; display: flex; align-items: center; padding-left: 25px; }
.g-road { height: 62px; padding-top: 1px; }
.g-sel { height: 60px; background: #c4dafc; border-radius: 6px; padding-left: 0; }
.g-sel i { width: 6px; height: 24px; margin-right: 18px; background: #0052cc; border-radius: 0 3px 3px 0; }
.g-chart { height: 66px; padding-left: 24px; }
.s-ico1 { margin: 25px 0 0 46px; }
.s-ico2 { margin: 37px 0 0 46px; }
.dev { margin-top: 45px; margin-left: 42px; color: #42526e; }
.rule { height: 3px; background: #dfe1e6; margin: 5px 20px 0 12px; }
.foot1 { font-size: 17px; color: #42526e; margin: 10px 0 0 29px; letter-spacing: .05px; }
.foot2 { font-size: 17px; font-weight: 500; color: #5e6c84; margin: 10px 0 0 134px; }
.board { flex: 1; display: flex; flex-direction: column; align-items: flex-end; }
.board-more { width: 60px; height: 48px; margin: 71px 35px 0 0; border-radius: 4px; background: #f0f1f4; display: flex; align-items: center; justify-content: center; padding: 4px 0 0 4px; }
.board-col { width: 400px; height: 412px; margin: 120px 50px 0 0; background: #f4f5f7; border-radius: 6px; padding: 80px 6px 0; }
.card { height: 190px; background: #fff; border-radius: 4px; box-shadow: 0 2px 4px rgba(9, 30, 66, .35); }
.page-scroll { width: 25px; height: 501px; margin-top: 239px; background: #f1f1f1; display: flex; flex-direction: column; align-items: center; padding: 10px 0 9px; }
.quick { position: absolute; left: 1635px; top: 726px; width: 249px; height: 66px; border-radius: 33px; background: #6554c0; color: #fff; display: flex; align-items: center; padding-left: 27px; box-shadow: 0 6px 18px rgba(9, 30, 66, .3); font-size: 22px; font-weight: 600; }
.quick span { margin-left: 14px; width: 111px; padding-top: 1px; -webkit-text-stroke: .3px currentColor; }
.quick em { width: 40px; height: 40px; margin-left: 24px; border-radius: 50%; background: #403294; display: flex; align-items: center; justify-content: center; }
.blanket { position: absolute; inset: 0; background: rgba(9, 30, 66, .54); }

/* Scrollbars */
.scroll { width: 25px; height: 548px; flex: none; background: #f1f1f1; display: flex; flex-direction: column; align-items: center; padding: 10px 0; }
.up, .dn { width: 0; height: 0; border: 6px solid transparent; flex: none; }
.up { border-bottom: 6px solid #a3a3a3; border-top: 0; }
.dn { border-top: 6px solid #505050; border-bottom: 0; margin-top: auto; }
.scroll b { width: 21px; background: #c1c1c1; margin-top: 9px; }
.t1 { height: 320px; } .t2 { height: 291px; }
.page-scroll b { width: 21px; height: 412px; background: #bababa; margin-top: 9px; }
.page-scroll .up { border-bottom-color: #8a8a8a; }

/* Issue dialog */
.modal { position: absolute; left: 90px; top: 90px; width: 1740px; height: 650px; background: #fff; border-radius: 4px 4px 0 0; box-shadow: 0 0 2px rgba(9, 30, 66, .4), 0 8px 40px rgba(9, 30, 66, .4); }
.m-head { height: 102px; display: flex; align-items: center; padding: 18px 50px 0 48px; color: #42526e; }
.crumb { color: #6b778c; padding-top: 4px; width: 46px; flex: none; letter-spacing: .5px; }
.slash { color: #6b778c; margin: 4px 16px 0 15px; }
.story { margin: -1px 8px 0 0; }
.horn { margin-left: auto; }
.feedback { font-weight: 500; letter-spacing: .32px; margin-left: 9px; width: 135px; padding-top: 3px; }
.eye { margin-left: 47px; }
.watch { color: #0747a6; margin-left: 12px; width: 12px; font-weight: 500; padding-top: 4px; }
.thumb { margin-left: 40px; }
.shr { margin: 0 31px 0 37px; }
.dts { margin-right: 35px; }
.m-body { display: flex; height: 548px; overflow: hidden; }
.left { width: 1049px; padding: 11px 0 0 48px; }
h1 { font-size: 34px; line-height: 48px; letter-spacing: .18px; }
.btns { display: flex; gap: 12px; margin-top: 13px; }
.btn { height: 48px; border-radius: 4.5px; background: #f4f5f7; color: #42526e; font-weight: 500; display: flex; align-items: center; padding-top: 3px; }
.btn svg { margin-top: -3px; }
.b-att { width: 131px; padding-left: 16px; gap: 9px; letter-spacing: .25px; }
.b-sub { width: 209px; padding-left: 16px; gap: 7px; letter-spacing: .05px; }
.split { display: flex; gap: 3px; background: #dfe1e6; border-radius: 4.5px; }
.b-link { width: 161px; padding-left: 16px; gap: 8px; letter-spacing: .1px; border-radius: 4.5px 0 0 4.5px; }
.b-chev { width: 48px; justify-content: center; border-radius: 0 4.5px 4.5px 0; }
.b-more { width: 48px; justify-content: center; }
h2 { font-size: 20px; line-height: 30px; }
.desc { margin-top: 29px; letter-spacing: .1px; }
.desc-t { margin-top: 11px; font-weight: 400; letter-spacing: -.13px; color: #344563; }
.li-row { display: flex; justify-content: space-between; align-items: center; margin: 73px 44px 0 0; }
.li-row svg { margin-top: -2px; }
.blocked { font-size: 17px; font-weight: 500; line-height: 24px; margin-top: 15px; letter-spacing: .35px; color: #6b778c; }
.li-clip { margin: 15px 0 0 -2px; width: 967px; height: 27px; overflow: hidden; border-bottom: 3px solid #ebecf0; }
.li-box { height: 60px; border: 2px solid #dfe1e6; border-radius: 5px; display: flex; padding-left: 12px; }
.stub { width: 24px; height: 20px; margin-top: 21px; border-radius: 3px; background: #c9ccd3; }
.dot { width: 36px; height: 36px; margin: 15px 0 0 742px; border-radius: 50%; background: #ff991f; }
.comment { display: flex; gap: 21px; margin: 0 0 0 3px; padding-top: 24px; align-items: flex-start; }
.comment .av { margin-top: 6px; }
.c-in { width: 893px; height: 60px; border: 1.5px solid #dfe1e6; border-radius: 5px; padding-left: 31px; line-height: 61px; letter-spacing: -.1px; color: #7a7a7a; }
.tip { font-size: 17px; line-height: 24px; margin-top: 13px; color: #6b778c; display: flex; gap: 6px; }
.tip b { width: 62px; }
.press { width: 40px; letter-spacing: -.2px; }
kbd { width: 27px; height: 24px; background: #dfe1e6; border-radius: 4px; text-align: center; font: 700 17px/25px "Open Sans", sans-serif; color: #42526e; }
.right { width: 641px; padding: 18px 0 0 51px; }
.status { width: 153px; height: 48px; border-radius: 4.5px; background: #dfe1e6; font-weight: 500; display: flex; align-items: center; gap: 18px; padding: 3px 0 0 18px; letter-spacing: .3px; }
.panel { width: 560px; border: 1.5px solid #dfe1e6; border-radius: 6px; margin-top: 12px; }
.pinned { height: 121px; padding: 21px 22px 0 18.5px; }
.p-head { display: flex; justify-content: space-between; font-weight: 500; line-height: 28px; letter-spacing: .2px; }
.p-head svg { margin-top: 3px; }
.p-text { display: flex; align-items: center; gap: 8px; margin-top: 25px; line-height: 28px; color: #344563; }
.p-text svg { margin-top: -1px; }
.details { height: 400px; }
.d-head { height: 71px; border-bottom: 1.5px solid #dfe1e6; display: flex; justify-content: space-between; align-items: center; padding: 4px 29px 0 18.5px; margin-bottom: 4px; font-weight: 500; letter-spacing: .1px; }
.d-head svg { color: #42526e; margin-top: -6px; }
.flip { transform: rotate(180deg); }
.f { height: 66px; display: flex; align-items: center; padding-left: 18.5px; }
.f label { width: 208.5px; font-size: 17px; font-weight: 500; letter-spacing: .1px; color: #42526e; }
.f .av { margin: 1px 15px 0 3px; }
.f .av + span { letter-spacing: .14px; padding-top: 2px; }
.f .none { color: #6b778c; padding-top: 2px; letter-spacing: -.1px; }
.epic { height: 30px; padding: 0 7px 0 6px; margin-top: -3px; background: #4c9aff; border-radius: 4px; letter-spacing: -.1px; color: #253858; }

/* Downloads shelf */
.shelf { height: 84px; flex: none; background: #fff; display: flex; align-items: center; color: #303134; }
.dl { width: 349.7px; height: 66px; display: flex; align-items: center; padding-left: 33px; border-right: 1.5px solid #bdbdbd; font-size: 19px; }
.dl:first-child { width: 355px; }
.dl + .dl { padding-left: 27.5px; }
.dl span { margin-left: 24px; width: 238px; letter-spacing: -.25px; padding-top: 2px; }
.dl svg { margin-top: -2px; }
.all { width: 194px; height: 48px; margin-left: auto; border: 1.5px solid #dadce0; border-radius: 6px; text-align: center; font-size: 17px; font-weight: 500; line-height: 44px; letter-spacing: .3px; color: #1a73e8; }
.sx { margin: -2px 20px 0 19px; color: #202124; }

/* Taskbar */
.task { height: 60px; flex: none; background: #3a3755; display: flex; color: #fff; }
.start { width: 72px; padding: 18px 0 0 24px; }
.tsearch { width: 516px; background: #f1f1f1; border: 2px solid #c0c0c0; display: flex; align-items: center; padding-left: 16px; color: #303030; font-size: 21px; position: relative; }
.tsearch span { margin: 4px 0 0 16px; letter-spacing: .25px; }
.art { position: absolute; right: -2px; top: -2px; }
.tb { width: 75px; display: flex; align-items: center; justify-content: center; position: relative; }
.tb:nth-of-type(3) { width: 72px; }
.tview { padding-right: 4px; }
.run::after { content: ""; position: absolute; left: 7px; right: 7px; bottom: 0; height: 3px; background: #76b9ed; }
.snip { width: 73px; margin-left: 2px; background: #616077; border-bottom: 3px solid #76b9ed; padding-top: 3px; }
.badge { position: absolute; width: 25px; height: 25px; border-radius: 50%; background: #2c2c38; border: 1px solid #999; font-size: 17px; font-weight: 500; line-height: 23px; text-align: center; }
.tb .badge { left: 44px; top: 29px; }
.pb { position: absolute; left: 35px; top: 27px; width: 24px; height: 24px; }
.pa { border-radius: 50%; background: #4b27a8; text-align: center; font-size: 13px; font-weight: 600; line-height: 24px; color: #d9d2ee; }
.tray { margin-left: auto; display: flex; align-items: center; width: 546px; }
.temp { width: 42px; margin: 5px 0 0 16px; letter-spacing: -.5px; }
.t-up { margin-left: 27px; } .t-cam { margin-left: 20px; } .t-cloud { margin-left: 14px; } .t-vol { margin-left: 12px; } .t-kb { margin-left: 13px; }
.lang { width: 34px; margin-left: 17px; font-size: 17px; letter-spacing: -.2px; }
.clock { width: 93px; margin-left: 20px; display: flex; flex-direction: column; align-items: center; font-size: 17px; line-height: 28px; letter-spacing: .1px; }
.notif { margin: 5px 0 0 28px; position: relative; }
.notif .badge { left: 12px; top: 10px; font-weight: 700; }
.peek { width: 1px; height: 60px; margin-left: auto; margin-right: 6px; background: #8d8b9d; }
```
